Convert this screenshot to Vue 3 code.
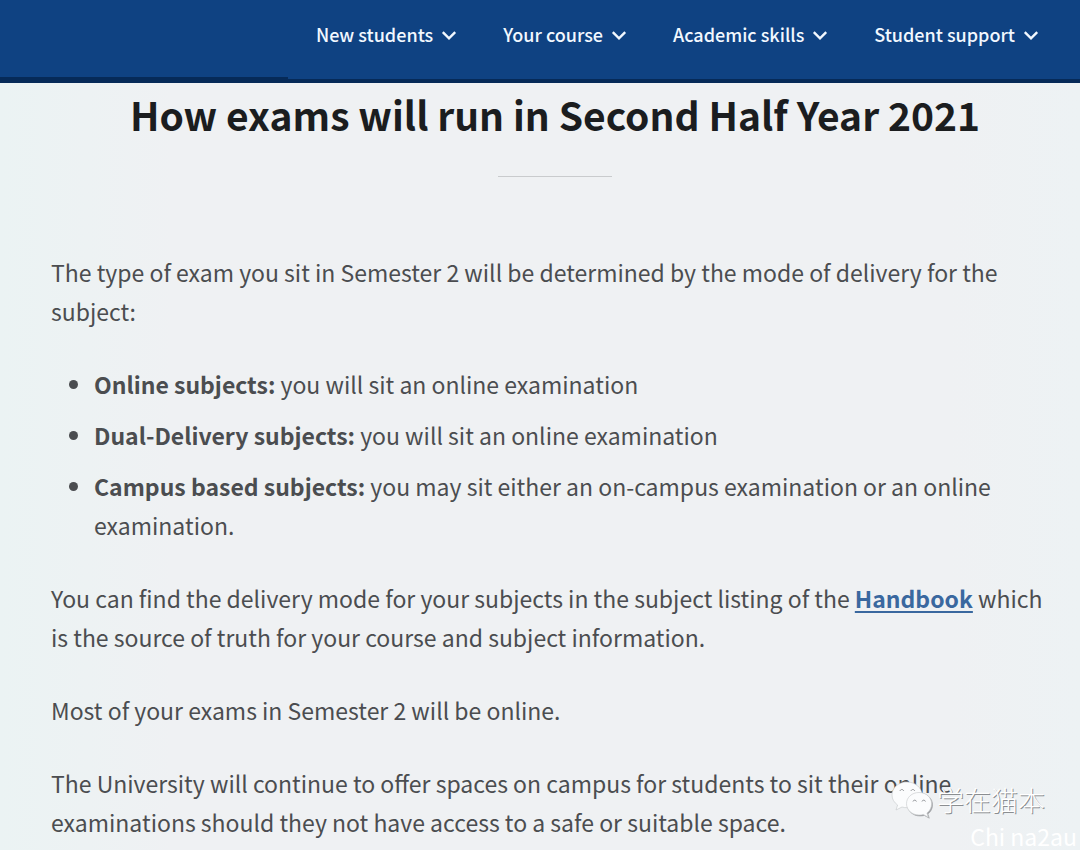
<script setup>
const menus = ['New students', 'Your course', 'Academic skills', 'Student support']

const rules = [
  { label: 'Online subjects:', text: 'you will sit an online examination' },
  { label: 'Dual-Delivery subjects:', text: 'you will sit an online examination' },
  { label: 'Campus based subjects:', text: 'you may sit either an on-campus examination or an online examination.' },
]
</script>

<template>
  <div class="page">
    <header class="header">
      <nav class="nav" aria-label="Main">
        <button v-for="menu in menus" :key="menu" class="menu" type="button">
          <span>{{ menu }}</span>
          <svg class="chevron" viewBox="0 0 16 14" aria-hidden="true">
            <path d="M1.800 5.200 8 11.400 14.200 5.200" />
          </svg>
        </button>
      </nav>
    </header>

    <main class="content">
      <h1 class="title">How exams will run in Second Half Year 2021</h1>
      <hr class="rule" />
      <p>The type of exam you sit in Semester 2 will be determined by the mode of delivery for the subject:</p>
      <ul class="list">
        <li v-for="rule in rules" :key="rule.label"><strong>{{ rule.label }}</strong> {{ rule.text }}</li>
      </ul>
      <p>
        You can find the delivery mode for your subjects in the subject listing of the
        <a class="link" href="#handbook">Handbook</a> which is the source of truth for your course and subject information.
      </p>
      <p>Most of your exams in Semester 2 will be online.</p>
      <p>
        The University will continue to offer spaces on campus for students to sit their online
        examinations should they not have access to a safe or suitable space.
      </p>
    </main>

    <div class="watermark">
      <div class="account">
        <svg class="bubbles" viewBox="0 0 42 38" aria-hidden="true">
          <path class="bubble" d="M16 1C7.500 1 1 6.800 1 14c0 4.200 2.200 7.600 5.600 10L5 29l6-3c1.600.5 3.200.7 5 .7C24.500 26.700 31 21 31 14S24.500 1 16 1Z" />
          <path class="bubble front" d="M28 11.500c-7.200 0-12.500 5-12.500 11.200S20.800 34 28 34c1.500 0 3-.2 4.300-.6l5 2.800-1.400-4.200c2.900-2.100 4.700-5.400 4.700-9.200 0-6.300-5.400-11.300-12.600-11.300Z" />
          <path class="eye" d="M9 10c.5-2 3.200-2 3.700 0M20 10c.5-2 3.200-2 3.700 0M22 20.500c.4-1.800 3-1.800 3.400 0M31 20.500c.4-1.800 3-1.800 3.400 0" />
        </svg>
        <span class="name">学在猫本</span>
      </div>
      <span class="site">Chi na2au</span>
    </div>
  </div>
</template>

<style>
body {
  margin: 0;
}
</style>

<style scoped>
.page {
  position: relative;
  min-height: 100vh;
  overflow: hidden;
  box-sizing: border-box;
  background: linear-gradient(90deg, #ebf3f3 0, #eff1f3 16%, #eff1f3 88%, #edf2f4 100%);
  color: #4b4d50;
  font-family: "Noto Sans CJK SC", "Noto Sans", sans-serif;
}

.header {
  position: relative;
  display: flex;
  justify-content: flex-end;
  box-sizing: border-box;
  height: 83px;
  padding: 19px 41px 0 20px;
  border-bottom: 4px solid #062a58;
  background: #0f4282;
}

.header::after {
  content: "";
  position: absolute;
  left: 0;
  bottom: 0;
  width: 288px;
  height: 2px;
  background: #062a58;
}

.nav {
  display: flex;
  align-items: flex-start;
  gap: 46px;
}

.menu {
  display: flex;
  align-items: center;
  gap: 8px;
  padding: 0;
  border: 0;
  background: none;
  color: #f2f8ff;
  font: 500 18px/30px "Noto Sans CJK SC", "Noto Sans", sans-serif;
  white-space: nowrap;
  cursor: pointer;
}

.chevron {
  width: 16px;
  height: 14px;
  fill: none;
  stroke: currentColor;
  stroke-width: 2.4;
}

.content {
  padding: 3px 21px 4px 51px;
}

.title {
  margin: 0;
  color: #1b1d1f;
  font-size: 39px;
  font-weight: 700;
  line-height: 56px;
  text-align: center;
}

.rule {
  width: 114px;
  height: 1px;
  margin: 34px auto 76px;
  border: 0;
  background: #c9cbcd;
}

.content p,
.list {
  margin: 0 0 34px;
  font-size: 23px;
  line-height: 39px;
}

.content p:last-child {
  margin-bottom: 0;
}

.list {
  display: flex;
  flex-direction: column;
  gap: 12px;
  padding: 0 0 0 43px;
}

.list strong {
  font-weight: 700;
}

.link {
  color: #3a689f;
  font-weight: 700;
  text-decoration-thickness: 2px;
  text-underline-offset: 3px;
}

.watermark {
  position: absolute;
  right: 3px;
  bottom: 0;
  display: flex;
  flex-direction: column;
  align-items: flex-end;
  gap: 3px;
  color: #fff;
}

.account {
  display: flex;
  align-items: center;
  gap: 4px;
  margin-right: 32px;
}

.bubbles {
  width: 42px;
  height: 38px;
}

.bubble {
  fill: #fbfcfd;
  stroke: #c4c7ca;
  stroke-width: 0.6;
}

.front {
  filter: drop-shadow(1px 1px 0 #a0a2a5);
}

.eye {
  fill: none;
  stroke: #8f9295;
  stroke-width: 1;
}

.name {
  font-size: 27px;
  font-weight: 300;
  line-height: 38px;
  text-shadow: 1px 1px 0 #8b8e91;
}

.site {
  font-size: 23px;
  line-height: 28px;
}
</style>
